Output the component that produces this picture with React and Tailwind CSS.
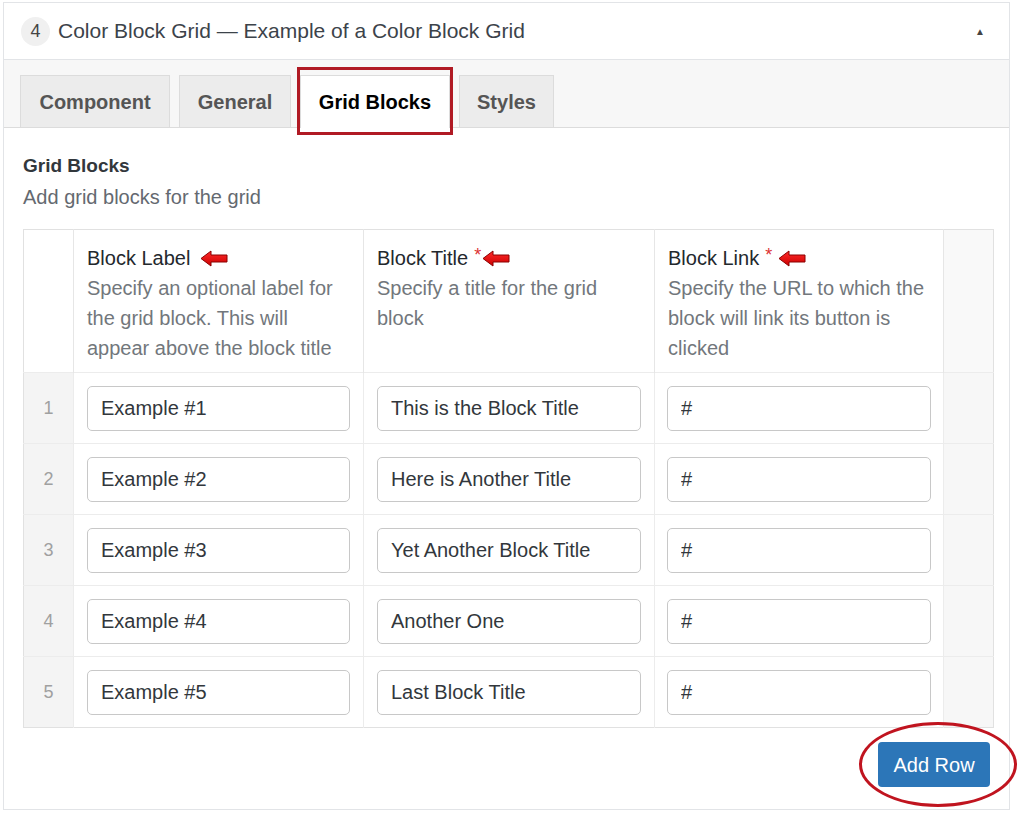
import React from 'react';

const rows = [
  { label: 'Example #1', title: 'This is the Block Title', link: '#' },
  { label: 'Example #2', title: 'Here is Another Title', link: '#' },
  { label: 'Example #3', title: 'Yet Another Block Title', link: '#' },
  { label: 'Example #4', title: 'Another One', link: '#' },
  { label: 'Example #5', title: 'Last Block Title', link: '#' },
];

const tabs = [
  { name: 'Component', w: 'w-[150px]' },
  { name: 'General', w: 'w-[112px]' },
  { name: 'Grid Blocks', w: 'w-[150px]', active: true },
  { name: 'Styles', w: 'w-[95px]' },
];

// little red block arrow pointing left, like the callouts on the screenshot
const Arrow = ({ className = '' }) => (
  <svg width="28" height="17" viewBox="0 0 28 17" className={className}>
    <defs>
      <linearGradient id="arrowRed" x1="0" y1="0" x2="0" y2="1">
        <stop offset="0" stopColor="#ff2b2b" />
        <stop offset="1" stopColor="#cc0000" />
      </linearGradient>
    </defs>
    <polygon
      points="1,8.5 11,1 11,5 27,5 27,12 11,12 11,16"
      fill="url(#arrowRed)"
      stroke="#8a0000"
      strokeWidth="1"
      strokeLinejoin="round"
    />
  </svg>
);

const Required = () => <span className="text-[#dc3232] text-[18px] leading-none relative -top-[3px] ml-[6px]">*</span>;

const TextInput = ({ value }) => (
  <input
    type="text"
    defaultValue={value}
    className="w-full h-[45px] border border-[#c8c8c8] rounded-[5px] bg-white pl-[13px] text-[20px] text-[#32373c] outline-none"
  />
);

const App = () => {
  return (
    <div className="bg-white min-h-[827px] pt-[2px] pl-[3px] font-['Liberation_Sans',Arial,sans-serif]">
      <div className="relative w-[1007px] border border-[#e2e4e7] bg-white">
        {/* Header */}
        <div className="h-[57px] flex items-center pl-[17px] pr-[24px] border-b border-[#e2e4e7]">
          <div className="w-[29px] h-[29px] rounded-full bg-[#f0f0f0] flex items-center justify-center text-[18px] text-[#444]">
            4
          </div>
          <div className="ml-[8px] text-[21px] text-[#3c434a]">
            Color Block Grid — Example of a Color Block Grid
          </div>
          <div className="ml-auto text-[10px] text-[#444]">▲</div>
        </div>

        {/* Tabs */}
        <div className="h-[68px] bg-[#f7f7f7] border-b border-[#dcdcdc] flex items-end pl-[16px] gap-[9px]">
          {tabs.map((tab) => (
            <div
              key={tab.name}
              className={`relative ${tab.w} h-[52px] flex items-center justify-center border border-b-0 text-[20px] font-bold ${
                tab.active
                  ? 'bg-white border-[#dcdcdc] text-black -mb-px h-[53px]'
                  : 'bg-[#ececec] border-[#dcdcdc] text-[#555]'
              }`}
            >
              {tab.name}
              {tab.active && (
                <div className="absolute -top-[9px] -left-[4px] -right-[4px] -bottom-[7px] border-[3px] border-[#b01a24]" />
              )}
            </div>
          ))}
        </div>

        {/* Content */}
        <div className="pl-[19px] pr-[16px] pt-[26px] pb-[22px]">
          <h3 className="text-[19px] leading-[24px] font-bold text-[#32373c]">Grid Blocks</h3>
          <p className="mt-[5px] text-[20px] leading-[28px] text-[#646970]">Add grid blocks for the grid</p>

          <table className="mt-[18px] w-[970px] table-fixed border-collapse border border-[#e1e1e1]">
            <colgroup>
              <col className="w-[50px]" />
              <col className="w-[290px]" />
              <col className="w-[291px]" />
              <col className="w-[289px]" />
              <col className="w-[50px]" />
            </colgroup>
            <thead>
              <tr className="h-[143px] align-top text-left">
                <th className="bg-white" />
                <th className="border-l border-[#e6e6e6] px-[13px] pt-[13px] font-normal">
                  <div className="flex items-center text-[20px] leading-[30px] text-[#23282d]">
                    Block Label
                    <Arrow className="ml-[10px]" />
                  </div>
                  <div className="text-[20px] leading-[30px] text-[#72777c]">
                    Specify an optional label for the grid block. This will appear above the block title
                  </div>
                </th>
                <th className="border-l border-[#e6e6e6] px-[13px] pt-[13px] font-normal">
                  <div className="flex items-center text-[20px] leading-[30px] text-[#23282d]">
                    Block Title
                    <Required />
                    <Arrow className="ml-[1px]" />
                  </div>
                  <div className="text-[20px] leading-[30px] text-[#72777c]">Specify a title for the grid block</div>
                </th>
                <th className="border-l border-[#e6e6e6] px-[13px] pt-[13px] font-normal">
                  <div className="flex items-center text-[20px] leading-[30px] text-[#23282d]">
                    Block Link
                    <Required />
                    <Arrow className="ml-[6px]" />
                  </div>
                  <div className="text-[20px] leading-[30px] text-[#72777c]">
                    Specify the URL to which the block will link its button is clicked
                  </div>
                </th>
                <th className="border-l border-[#e6e6e6] bg-[#f9f9f9]" />
              </tr>
            </thead>
            <tbody>
              {rows.map((row, i) => (
                <tr key={i} className="h-[71px] border-t border-[#ececec]">
                  <td className="bg-[#f4f4f4] text-center text-[18px] text-[#a0a0a0]">{i + 1}</td>
                  <td className="border-l border-[#ececec] px-[13px]">
                    <TextInput value={row.label} />
                  </td>
                  <td className="border-l border-[#ececec] px-[13px]">
                    <TextInput value={row.title} />
                  </td>
                  <td className="border-l border-[#ececec] px-[12px]">
                    <TextInput value={row.link} />
                  </td>
                  <td className="border-l border-[#ececec] bg-[#f7f7f7]" />
                </tr>
              ))}
            </tbody>
          </table>

          <div className="mt-[14px] flex justify-end pr-[3px]">
            <div className="relative">
              <button className="w-[112px] h-[45px] rounded-[4px] bg-[#2c76b8] text-white text-[20px]">
                Add Row
              </button>
              {/* red circle callout */}
              <div className="absolute -top-[20px] -left-[19px] w-[158px] h-[85px] rounded-[50%] border-[3px] border-[#c0141f] pointer-events-none" />
            </div>
          </div>
        </div>
      </div>
    </div>
  );
};

export default App;
